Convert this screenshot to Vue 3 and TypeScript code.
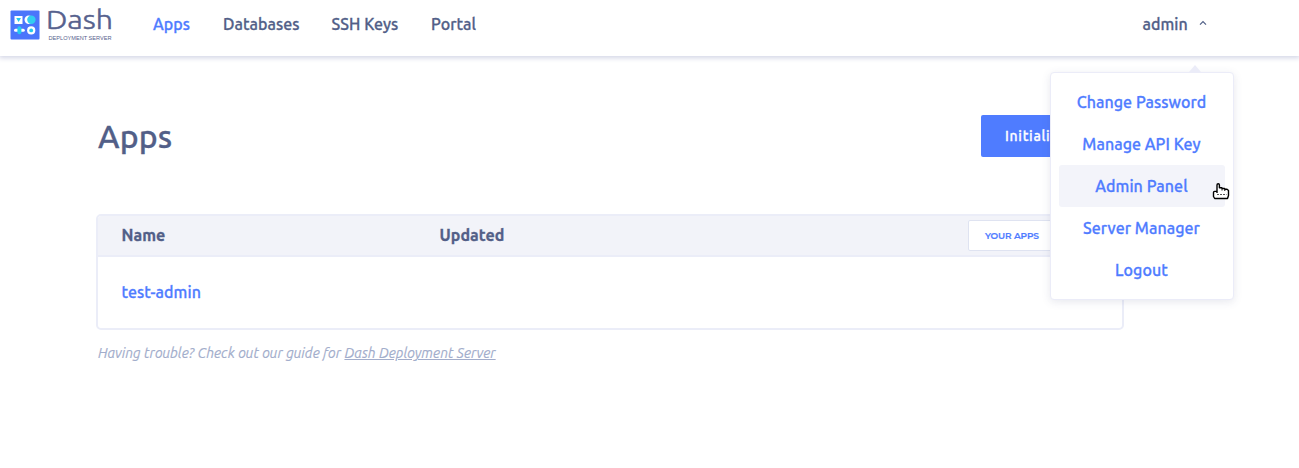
<script setup lang="ts">
import { ref } from 'vue'

const navItems: string[] = ['Apps', 'Databases', 'SSH Keys', 'Portal']
const menuItems: string[] = ['Change Password', 'Manage API Key', 'Admin Panel', 'Server Manager', 'Logout']
const apps: string[] = ['test-admin']
const activeNav = ref('Apps')
const hovered = ref('Admin Panel')
</script>

<template>
  <div class="page">
    <header class="topbar">
      <div class="brand">
        <svg class="mark" width="30" height="30" viewBox="0 0 30 30">
          <rect x="0.5" y="0.5" width="29" height="29" rx="1" fill="#4b75fb" />
          <rect x="4.5" y="6" width="8" height="8" fill="#fff" />
          <path d="M6.2 8h4.8L8.6 12z" fill="#25c9ef" />
          <circle cx="18.7" cy="9.8" r="4.2" fill="#fff" />
          <circle cx="21.4" cy="9.8" r="4.2" fill="#32cdf0" />
          <rect x="4" y="18.8" width="10.8" height="3" rx="1.5" fill="#fff" />
          <rect x="7.4" y="16.2" width="4" height="8" rx="2" fill="#25c9ef" />
          <circle cx="21.2" cy="20.4" r="4.1" fill="#fff" />
          <circle cx="21.2" cy="20.4" r="1.9" fill="#25c9ef" />
        </svg>
        <svg class="wordmark" width="72" height="40" viewBox="0 0 72 40">
          <text class="dash" x="6" y="29" textLength="67" lengthAdjust="spacingAndGlyphs">Dash</text>
          <text class="sub" x="8.5" y="40" textLength="63" lengthAdjust="spacingAndGlyphs">DEPLOYMENT SERVER</text>
        </svg>
      </div>
      <nav class="nav">
        <a v-for="n in navItems" :key="n" :class="{ active: n === activeNav }">{{ n }}</a>
      </nav>
      <div class="user">
        <span>admin</span>
        <svg width="8" height="6" viewBox="0 0 8 6"><path d="M1 4.6L4 1.6L7 4.6" fill="none" stroke="#506087" stroke-width="1.2" /></svg>
      </div>
    </header>

    <main class="content">
      <div class="heading">
        <h1>Apps</h1>
        <button class="init">Initialize App</button>
      </div>
      <section class="table">
        <div class="thead">
          <span class="name">Name</span>
          <span class="updated">Updated</span>
          <div class="filter"><span>YOUR APPS</span></div>
        </div>
        <div v-for="a in apps" :key="a" class="row"><a>{{ a }}</a></div>
      </section>
      <p class="help">Having trouble? Check out our guide for <a>Dash Deployment Server</a></p>
    </main>

    <div class="menu">
      <i class="caret"></i>
      <a v-for="m in menuItems" :key="m" :class="{ hover: m === hovered }">{{ m }}</a>
    </div>

    <svg class="cursor" width="18" height="18" viewBox="0 0 18 18">
      <path d="M5 9.5V3Q5 1.7 6.2 1.7T7.4 3V5.8H9.8L10.5 6.5H12.5L13.2 7.2H15L16.5 8.6V13.5L15.5 16.5H2.7L1.5 14.5V10.4Q1.5 9.4 2.6 9.4H5V11" fill="#fff" stroke="#000" stroke-width="1.4" stroke-linejoin="round" />
      <path d="M10 6V8.5M12.8 7V9" stroke="#000" stroke-width="1" />
      <path d="M5 12.5H14.5" stroke="#555" stroke-width="1" stroke-dasharray="2 1" />
    </svg>
  </div>
</template>

<style>
body { margin: 0; background: #fff; }
</style>

<style scoped>
.page { position: relative; width: 1299px; height: 468px; overflow: hidden; background: #fff; font-family: Ubuntu, "Noto Sans", sans-serif; font-weight: 500; font-size: 16px; letter-spacing: 0.05px; color: #525f88; }
.topbar { height: 56px; box-sizing: border-box; display: flex; background: #fff; box-shadow: 0 1px 5px 1px #d3d5e6; }
.brand { display: flex; width: 143px; padding: 10px 0 0 10px; box-sizing: border-box; }
.wordmark { margin-top: -10px; overflow: visible; fill: #56618d; }
.dash { font-size: 27px; font-weight: 300; letter-spacing: 0; stroke: #56618d; stroke-width: 0.5px; }
.sub { font-family: "Liberation Sans", sans-serif; font-size: 6px; font-weight: 400; letter-spacing: 0; }
.nav, .user, h1, .row, .menu, .init, .name, .updated { -webkit-text-stroke: 0.3px currentColor; }
.nav { display: grid; grid-template-columns: 70px 108.5px 99.5px 60px; margin-left: 10px; line-height: 48px; height: 48px; white-space: nowrap; }
.nav .active { color: #4f7cff; }
.user { display: flex; margin-left: auto; width: 156.5px; line-height: 48px; height: 48px; }
.user svg { margin: 20px 0 0 11px; }
.content { width: 1028px; margin: 0 0 0 96px; }
.heading { display: flex; justify-content: space-between; padding: 59px 0 57px 2px; height: 42px; }
h1 { margin: 0; font-size: 32px; line-height: 42px; font-weight: 500; letter-spacing: 0.1px; }
.init { width: 143px; height: 42px; border: 0; border-radius: 2px; padding: 0 0 0 24px; text-align: left; background: #4f7cff; color: #fff; font: 500 14px Ubuntu, "Noto Sans", sans-serif; letter-spacing: 0.7px; white-space: nowrap; }
.table { border: 2px solid #ebedf8; border-radius: 5px; height: 112px; overflow: hidden; }
.thead { display: flex; align-items: center; height: 39px; border-bottom: 2px solid #ebedf8; background: #f2f3f9; font-weight: 700; }
.name, .updated { padding-bottom: 2px; }
.name { width: 318px; padding-left: 23.5px; }
.updated { width: 528.5px; }
.filter { flex: none; width: 130px; height: 29px; border: 1px solid #dfe3f1; border-radius: 2px; background: #fff; color: #4f7cff; font: 600 9px/30px Montserrat, Inter, sans-serif; letter-spacing: -0.1px; padding-left: 16px; -webkit-text-stroke: 0.2px currentColor; }
.row { display: flex; align-items: center; height: 69px; padding-left: 23.5px; color: #4f7cff; }
.help { margin: 13px 0 0 2px; font-size: 14px; line-height: 20px; font-weight: 400; font-style: italic; color: #a2adcb; white-space: nowrap; letter-spacing: 0.035px; -webkit-text-stroke: 0.15px currentColor; }
.help a { text-decoration: underline; }
.menu { position: absolute; left: 1050px; top: 72px; width: 184px; height: 228px; box-sizing: border-box; padding: 8px; border: 1px solid #ebecf8; border-radius: 4px; background: #fff; box-shadow: 0 2px 8px rgba(70, 75, 120, .13); }
.menu a { display: block; height: 42px; line-height: 42px; text-align: center; text-indent: -1px; color: #4f7cff; border-radius: 3px; white-space: nowrap; }
.menu .hover { background: #f3f4fa; }
.caret { position: absolute; left: 138px; top: -8px; border: 6px solid transparent; border-top: 0; border-bottom: 7px solid #ebecf8; }
.cursor { position: absolute; left: 1212px; top: 182px; }
</style>
